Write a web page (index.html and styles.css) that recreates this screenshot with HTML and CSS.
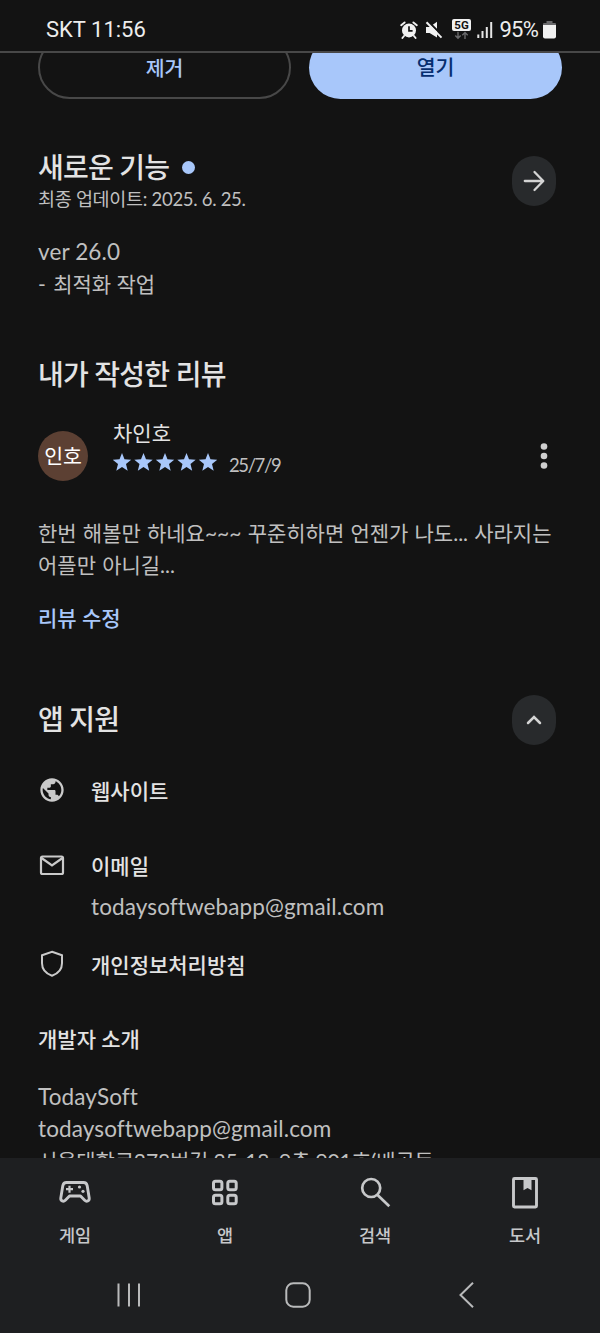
FILE: index.html
```
<!DOCTYPE html>
<html lang="ko">
<head>
<meta charset="utf-8">
<title>앱 정보</title>
<link rel="stylesheet" href="styles.css">
</head>
<body>
<div class="screen">
  <header class="status">
    <span class="status-clock">SKT 11:56</span>
    <div class="status-icons">
      <svg class="ic-alarm" width="18" height="18" viewBox="0 0 18 18"><circle cx="9" cy="9.4" r="7" fill="#f1f1f1"/><path d="M1.2 4.2 4.6 1.4M16.8 4.2 13.4 1.4M4 15 2.4 17M14 15l1.6 2" stroke="#f1f1f1" stroke-width="1.9" stroke-linecap="round"/><path d="M9 5.2v4.6h3.6" fill="none" stroke="#131313" stroke-width="1.7"/></svg>
      <svg class="ic-mute" width="18" height="18" viewBox="0 0 18 18"><path d="M1 6h3.6L12 .8v15.600L4.600 12H1z" fill="#f1f1f1"/><path d="M2.600 0 18 15.200" stroke="#131313" stroke-width="2.200"/><path d="M1.500 1.200 16.500 16.600" stroke="#f1f1f1" stroke-width="2"/></svg>
      <svg class="ic-5g" width="19" height="21" viewBox="0 0 19 21"><rect width="19" height="12" rx="2" fill="#f1f1f1"/><text class="net" x="9.500" y="10.200" text-anchor="middle">5G</text><path d="M6 12.800v6.200M3.300 16.500 6 19.300l2.700-2.800M13 20v-6.200M10.300 16.300 13 13.500l2.700 2.800" fill="none" stroke="#69696b" stroke-width="1.400"/></svg>
      <svg class="ic-signal" width="16" height="17" viewBox="0 0 16 17"><path d="M1.300 12.500V16M5.500 9v7M9.800 5v11M14.200 0v16" stroke="#e6e6e6" stroke-width="2"/></svg>
      <span class="status-pct">95%</span>
      <svg class="ic-battery" width="13" height="18" viewBox="0 0 13 18"><path d="M3.500 0h6v2H12a1 1 0 0 1 1 1v2H0V3a1 1 0 0 1 1-1h2.500z" fill="#69696b"/><path d="M0 4h13v11.500a2 2 0 0 1-2 2H2a2 2 0 0 1-2-2z" fill="#f1f1f1"/></svg>
    </div>
  </header>

  <main class="content">
    <div class="actions">
      <button class="btn btn-outline">제거</button>
      <button class="btn btn-filled">열기</button>
    </div>

    <section class="news">
      <div class="news-head">
        <div>
          <h2 class="title">새로운 기능<span class="dot"></span></h2>
          <p class="updated">최종 업데이트: 2025. 6. 25.</p>
        </div>
        <button class="round"><svg width="24" height="24" viewBox="0 0 24 24"><path d="M2.800 12h18M12.500 3l8.800 9-8.800 9" fill="none" stroke="#d4d4d4" stroke-width="2.300" stroke-linecap="round" stroke-linejoin="round"/></svg></button>
      </div>
      <p class="text news-text"><span class="latin">ver 26.0</span><br><span class="bullet">-</span> 최적화 작업</p>
    </section>

    <section class="review">
      <h2 class="title">내가 작성한 리뷰</h2>
      <div class="review-head">
        <div class="avatar">인호</div>
        <div class="review-meta">
          <p class="name">차인호</p>
          <div class="rating">
            <svg width="104" height="18" viewBox="0 0 104 18" fill="#a8c7fa"><defs><path id="star" d="M9 0l2.500 6.300 6.700.5-5.200 4.300 1.700 6.600L9 14.100l-5.700 3.600L5 11.100-.2 6.800l6.700-.5z"/></defs><use href="#star"/><use href="#star" x="21.500"/><use href="#star" x="43"/><use href="#star" x="64.500"/><use href="#star" x="86"/></svg>
            <span class="date">25/7/9</span>
          </div>
        </div>
        <svg class="more" width="8" height="26" viewBox="0 0 8 26" fill="#cfcfcf"><circle cx="4" cy="3.500" r="3.300"/><circle cx="4" cy="13" r="3.300"/><circle cx="4" cy="22.500" r="3.300"/></svg>
      </div>
      <p class="text review-text">한번 해볼만 하네요~~~ 꾸준히하면 언젠가 나도... 사라지는<br>어플만 아니길...</p>
      <a class="edit">리뷰 수정</a>
    </section>

    <section class="support">
      <div class="support-head">
        <h2 class="title">앱 지원</h2>
        <button class="round"><svg width="18" height="12" viewBox="0 0 18 12"><path d="M3 9l6-6 6 6" fill="none" stroke="#d4d4d4" stroke-width="2.500" stroke-linecap="round"/></svg></button>
      </div>
      <div class="row">
        <svg width="28" height="28" viewBox="0 0 24 24"><path fill="#cacaca" d="M12 2C6.480 2 2 6.480 2 12s4.480 10 10 10 10-4.480 10-10S17.520 2 12 2zm-1 17.930c-3.950-.49-7-3.850-7-7.930 0-.62.080-1.210.210-1.790L9 15v1c0 1.100.9 2 2 2v1.930zm6.900-2.540c-.26-.81-1-1.390-1.900-1.390h-1v-3c0-.55-.45-1-1-1H8v-2h2c.55 0 1-.45 1-1V7h2c1.100 0 2-.9 2-2v-.41c2.930 1.190 5 4.060 5 7.410 0 2.080-.8 3.970-2.100 5.390z"/></svg>
        <span class="label">웹사이트</span>
      </div>
      <div class="row row-mail">
        <svg width="28" height="28" viewBox="0 0 28 28" fill="none" stroke="#cacaca" stroke-width="2.200"><rect x="3" y="5.500" width="22" height="17.500" rx="1.500"/><path d="M3.500 7 14 14.500 24.500 7"/></svg>
        <span class="label">이메일</span>
      </div>
      <p class="text mail latin">todaysoftwebapp@gmail.com</p>
      <div class="row row-privacy">
        <svg width="28" height="28" viewBox="0 0 28 28"><path d="M14 1.700 24 5.300v8c0 5.500-3.600 10.200-10 12.500C7.600 23.500 4 18.800 4 13.300v-8z" fill="none" stroke="#cacaca" stroke-width="2"/></svg>
        <span class="label">개인정보처리방침</span>
      </div>
      <h3 class="label dev">개발자 소개</h3>
      <p class="text dev-text"><span class="latin">TodaySoft<br>todaysoftwebapp@gmail.com</span><br><span class="address">서울대학로278번길 25-18, 9층 901호(배곧동</span></p>
    </section>
  </main>

  <footer class="bottom">
    <nav class="tabs">
      <a class="tab"><svg width="34" height="34" viewBox="0 0 34 34"><path d="M8.500 7.500h17c2 0 3.300 1.200 3.700 3.200l2 12.200c.5 3.200-2.700 4.100-4.500 2.300L22.500 21h-11l-4.200 4.200c-1.800 1.800-5 .9-4.500-2.300l2-12.200c.4-2 1.700-3.200 3.700-3.200z" fill="none" stroke="#c7c8ca" stroke-width="2.900" stroke-linejoin="round"/><path d="M11.500 10.700v7M8 14.200h7" stroke="#c7c8ca" stroke-width="2.200"/><circle cx="21.500" cy="12" r="1.600" fill="#c7c8ca"/><circle cx="25" cy="16.300" r="1.600" fill="#c7c8ca"/></svg><span>게임</span></a>
      <a class="tab"><svg width="34" height="34" viewBox="0 0 34 34" fill="none" stroke="#c7c8ca" stroke-width="3"><rect x="5.500" y="6.300" width="8.400" height="8.400" rx="2"/><rect x="19.800" y="6.300" width="8.400" height="8.400" rx="2"/><rect x="5.500" y="20.300" width="8.400" height="8.400" rx="2"/><rect x="19.800" y="20.300" width="8.400" height="8.400" rx="2"/></svg><span>앱</span></a>
      <a class="tab"><svg width="34" height="34" viewBox="0 0 34 34" fill="none" stroke="#c7c8ca" stroke-width="2.700"><circle cx="13.200" cy="13" r="9"/><path d="M19.300 19.800 31.300 31.300"/></svg><span>검색</span></a>
      <a class="tab"><svg width="34" height="34" viewBox="0 0 34 34"><rect x="5.500" y="3.500" width="23" height="28.500" rx="1" fill="none" stroke="#c7c8ca" stroke-width="2.900"/><path d="M15.500 3h8v12.300l-4-2.300-4 2.300z" fill="#c7c8ca"/></svg><span>도서</span></a>
    </nav>
    <div class="sysbar">
      <svg width="26" height="26" viewBox="0 0 26 26"><path d="M2.500 1.500v23M13 1.500v23M23 1.500v23" stroke="#b9babb" stroke-width="2"/></svg>
      <svg width="26" height="26" viewBox="0 0 26 26"><rect x="1.300" y="1.300" width="23.400" height="23.400" rx="7" fill="none" stroke="#b9babb" stroke-width="2"/></svg>
      <svg width="26" height="26" viewBox="0 0 26 26"><path d="M20 .8 7.500 13 20 25.200" fill="none" stroke="#b9babb" stroke-width="2"/></svg>
    </div>
  </footer>
</div>
</body>
</html>
```
FILE: styles.css
```
* { box-sizing: border-box; margin: 0; padding: 0; }
body { background: #131313; font-family: "Lato", "Noto Sans CJK KR", sans-serif; color: #e3e3e3; }
button { border: 0; background: none; font: inherit; }
svg { display: block; flex: none; }

.screen { width: 600px; height: 1333px; display: flex; flex-direction: column; overflow: hidden; background: #131313; }

.status { height: 53px; flex: none; padding: 8px 44px 0 46px; display: flex; justify-content: space-between; align-items: flex-start; border-bottom: 2px solid #484848; font-family: Roboto, sans-serif; font-size: 22px; line-height: 44px; color: #ededed; }
.status-clock { letter-spacing: 0; }
.status-icons { display: flex; align-items: center; height: 44px; }
.ic-mute { margin-left: 7px; }
.ic-5g { margin: -2px 0 0 9px; }
.ic-signal { margin-left: 6px; }
.status-pct { margin-left: 7px; letter-spacing: -0.8px; }
.ic-battery { margin-left: 5px; }
.net { font: 700 11.5px Roboto, sans-serif; fill: #131313; }

.content { flex: 1; min-height: 0; overflow: hidden; padding: 0 38px; }
.actions { display: flex; justify-content: space-between; margin-top: -17px; }
.btn { width: 253px; height: 63px; border-radius: 32px; font-size: 20.5px; font-weight: 500; line-height: 60px; padding-bottom: 2px; }
.btn-outline { border: 2px solid #484848; color: #a8c7fa; padding: 0; }
.btn-filled { background: #a8c7fa; color: #062e6f; }

.title { display: flex; align-items: center; font-size: 28px; font-weight: 500; line-height: 32px; letter-spacing: -0.75px; white-space: pre; }
.dot { width: 13px; height: 13px; border-radius: 50%; background: #a8c7fa; margin-left: 13px; }
.text { font-size: 21px; line-height: 32px; color: #c0c0c0; white-space: nowrap; }
.latin { font-size: 22.5px; letter-spacing: 0.12px; }

.news { margin-top: 52px; }
.news-head { display: flex; justify-content: space-between; padding-right: 6px; }
.updated { font-size: 18.5px; line-height: 32px; letter-spacing: -0.3px; color: #c0c0c0; }
.round { width: 44px; height: 50px; border-radius: 22px; background: #282a2c; display: flex; align-items: center; justify-content: center; }
.news-head .round { margin-top: 5px; }
.news-text { margin-top: 21px; }
.bullet { margin-right: 2px; }

.review { margin-top: 58px; }
.review-head { display: flex; height: 62px; margin-top: 29px; padding-right: 15px; }
.avatar { width: 50px; height: 50px; margin-top: 12px; border-radius: 50%; background: #5c4033; color: #fff; font-size: 20.5px; line-height: 50px; text-align: center; }
.review-meta { flex: 1; margin-left: 25px; }
.name { font-size: 21px; line-height: 28px; }
.rating { display: flex; align-items: flex-start; padding-top: 6px; }
.date { margin-left: 12px; font-size: 18.5px; line-height: 25px; letter-spacing: -1.4px; color: #c0c0c0; }
.more { margin-top: 24px; margin-left: auto; margin-right: -1px; }
.review-text { margin-top: 36px; word-spacing: 0.8px; }
.edit { display: block; margin-top: 21px; font-size: 21px; font-weight: 500; line-height: 32px; color: #a8c7fa; }

.support { margin-top: 61px; }
.support-head { display: flex; justify-content: space-between; align-items: center; height: 50px; padding-right: 6px; }
.support-head .title { margin-top: -2px; }
.row { display: flex; align-items: center; height: 32px; margin-top: 30px; gap: 25px; }
.row svg { margin-top: -2px; }
.label { font-size: 21px; font-weight: 500; line-height: 32px; }
.row-mail { margin-top: 43px; }
.mail { margin: 9px 0 0 53px; font-size: 22.5px; }
.row-privacy { margin-top: 26px; }
.dev { margin-top: 42px; }
.dev-text { margin-top: 26px; }
.address { letter-spacing: -0.15px; }

.bottom { flex: none; height: 175px; background: #1e1f21; }
.tabs { display: flex; padding-top: 17px; }
.tab { flex: 1; display: flex; flex-direction: column; align-items: center; gap: 15px; font-size: 17.5px; font-weight: 500; line-height: 24px; color: #c7c8ca; }
.sysbar { display: flex; justify-content: space-between; padding: 34px 121px 0 116px; }
```
